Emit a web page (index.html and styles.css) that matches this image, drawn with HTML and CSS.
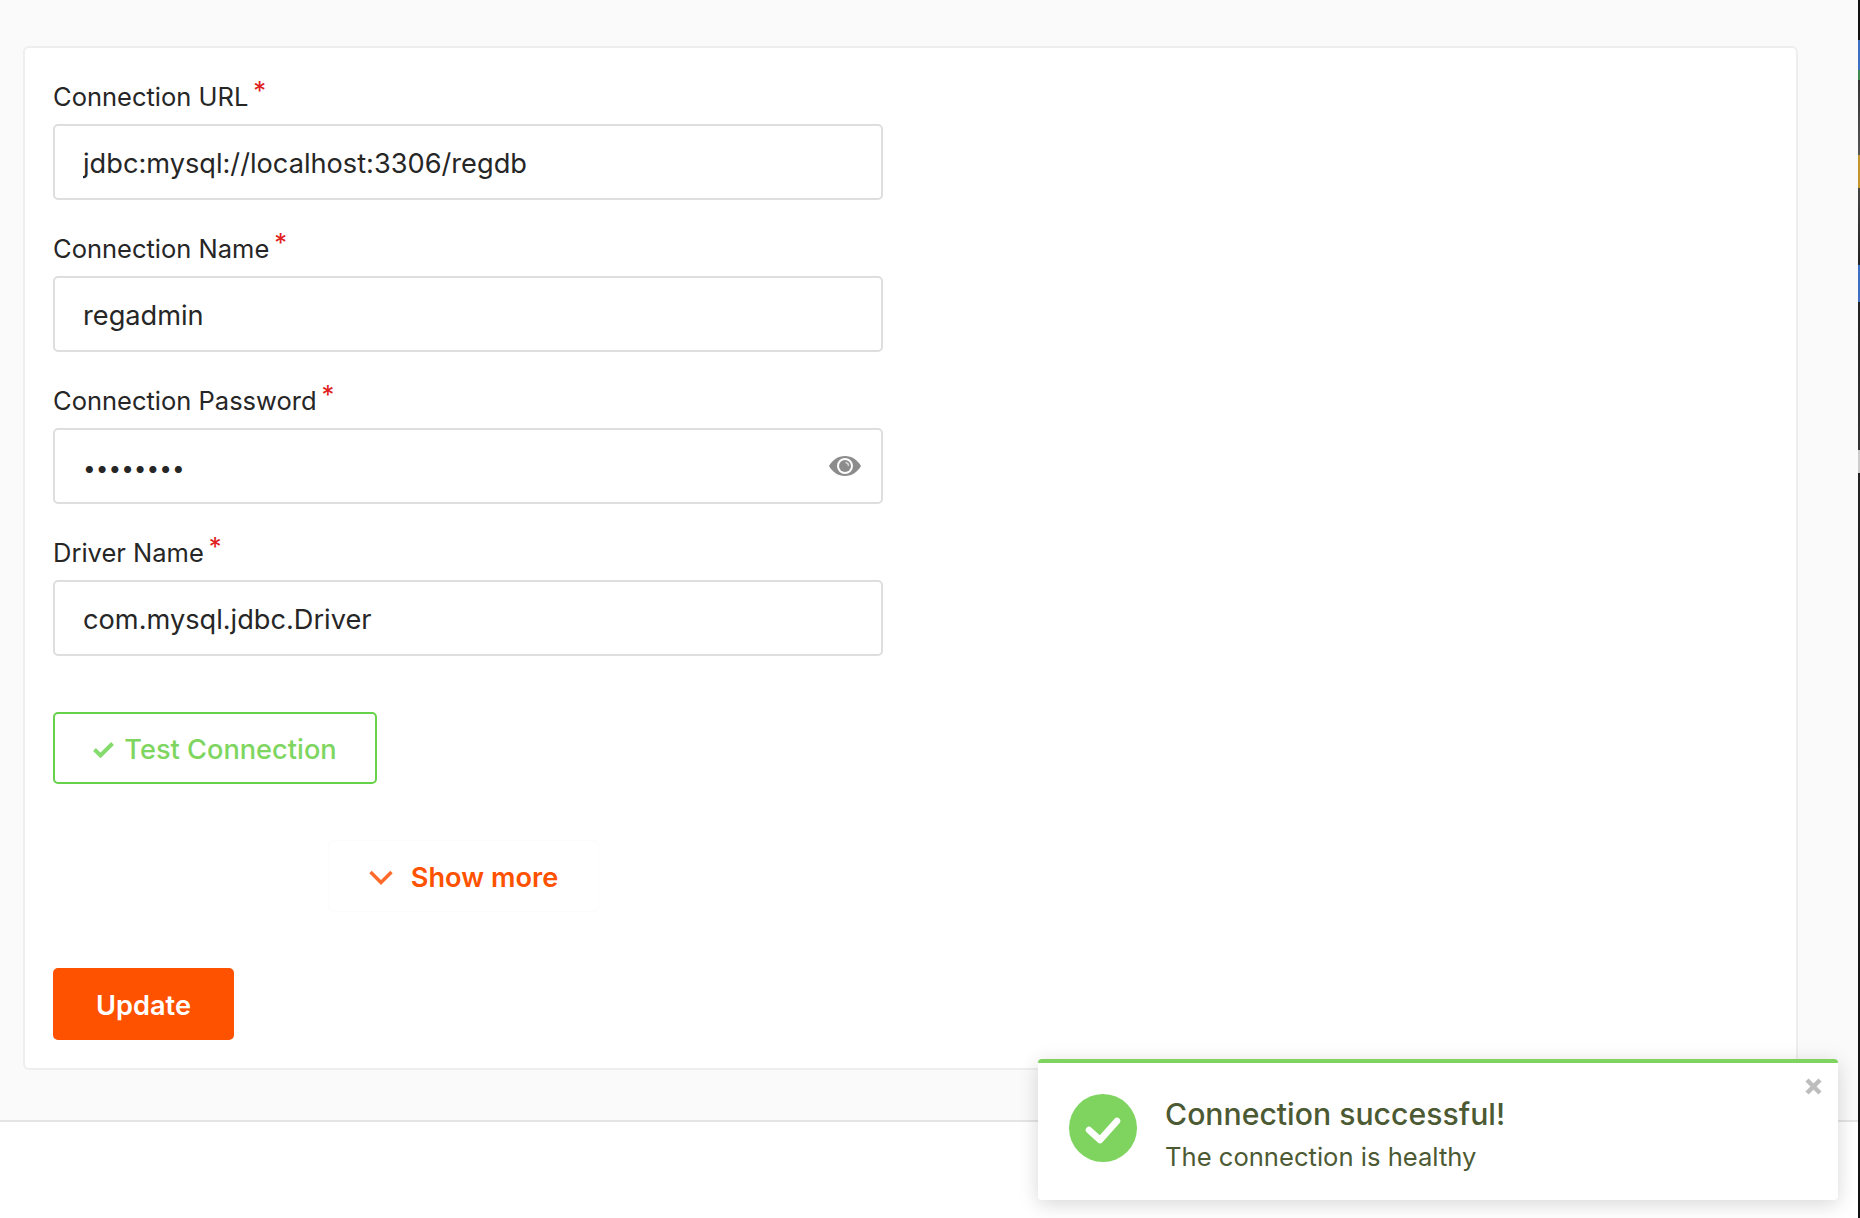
FILE: index.html
```html
<!DOCTYPE html>
<html lang="en">
<head>
    <meta charset="UTF-8">
    <meta name="viewport" content="width=device-width, initial-scale=1.0">
    <title>Edit Connection</title>
    <link rel="stylesheet" href="styles.css">
</head>
<body>
    <div class="page">
        <main class="content">
            <form class="card">
                <div class="field">
                    <label for="url">Connection URL<span class="req">*</span></label>
                    <input type="text" id="url" value="jdbc:mysql://localhost:3306/regdb">
                </div>
                <div class="field">
                    <label for="user">Connection Name<span class="req">*</span></label>
                    <input type="text" id="user" value="regadmin">
                </div>
                <div class="field">
                    <label for="password">Connection Password<span class="req">*</span></label>
                    <div class="password-box">
                        <input type="password" id="password" value="regadmin">
                        <svg class="eye" viewBox="0 0 32 20" width="32" height="20">
                            <path fill="#8c8c8c" fill-rule="evenodd" d="M16 0C9 0 3.500 4 0 10c3.500 6 9 10 16 10s12.500-4 16-10C28.500 4 23 0 16 0zm0 2a8 8 0 1 1 0 16 8 8 0 0 1 0-16z"/>
                            <circle cx="16" cy="10" r="6" fill="#8c8c8c"/>
                            <path fill="none" stroke="#d6d6d6" stroke-width="1.500" d="M16.500 6.500a3.500 3.500 0 0 1 3 3.500"/>
                        </svg>
                    </div>
                </div>
                <div class="field">
                    <label for="driver">Driver Name<span class="req">*</span></label>
                    <input type="text" id="driver" value="com.mysql.jdbc.Driver">
                </div>

                <button type="button" class="test-btn">
                    <svg viewBox="0 0 21 17" width="21" height="17">
                        <path fill="none" stroke="#85db6e" stroke-width="4" d="M1.500 8.500l6 6L19.500 2.500"/>
                    </svg>
                    Test Connection
                </button>

                <div class="more-row">
                    <button type="button" class="more-btn">
                        <svg viewBox="0 0 24 15" width="24" height="15">
                            <path fill="none" stroke="#ff6a2b" stroke-width="3.500" d="M1.500 2l10.500 10.500L22.500 2"/>
                        </svg>
                        Show more
                    </button>
                </div>

                <button type="submit" class="update-btn">Update</button>
            </form>
        </main>
        <footer class="footer"></footer>
    </div>
    <div class="window-edge"></div>

    <div class="toast">
        <svg class="toast-icon" viewBox="0 0 68 68" width="68" height="68">
            <circle cx="34" cy="34" r="34" fill="#7ed45f"/>
            <path fill="none" stroke="#fff" stroke-width="6.500" stroke-linecap="round" stroke-linejoin="round" d="M20 36l11 10 17-19"/>
        </svg>
        <div class="toast-body">
            <div class="toast-title">Connection successful!</div>
            <div class="toast-text">The connection is healthy</div>
        </div>
        <svg class="toast-close" viewBox="0 0 17 17" width="17" height="17">
            <path stroke="#bdbdbd" stroke-width="4.500" d="M2 2l13 13M15 2L2 15"/>
        </svg>
    </div>
</body>
</html>
```

FILE: styles.css
```css
* {
    box-sizing: border-box;
}

body {
    margin: 0;
    display: flex;
    height: 1218px;
    overflow: hidden;
    font-family: Inter, "Noto Sans", sans-serif;
    color: #262626;
    background: white;
}

.page {
    flex: 1;
}

.content {
    height: 1122px;
    padding: 46px 60px 0 23px;
    background: #fafafa;
    border-bottom: 2px solid #e4e4e4;
}

.window-edge {
    width: 2px;
    background: linear-gradient(#111 0, #111 40px, #3f6fc4 40px, #3f6fc4 70px, #3f8a4a 70px, #3f8a4a 80px, #333 80px, #555 155px, #c4952f 155px, #c4952f 188px, #444 188px, #222 265px, #3f6fc4 265px, #3f6fc4 302px, #222 302px, #333 450px, #ccc 450px, #ccc 473px, #222 473px, #111 100%);
}

.card {
    display: flex;
    flex-direction: column;
    align-items: flex-start;
    height: 1024px;
    padding: 29px 28px 0;
    background: white;
    border: 2px solid #eeeeee;
    border-radius: 6px;
}

.field {
    width: 830px;
    height: 152px;
}

label {
    display: block;
    height: 47px;
    font-size: 25.5px;
    line-height: 40px;
}

.req {
    position: relative;
    top: -6px;
    margin-left: 5px;
    color: #e02020;
}

input {
    display: block;
    width: 100%;
    height: 76px;
    padding: 3px 28px 0;
    background: white;
    border: 2px solid #dedede;
    border-radius: 5px;
    font-family: inherit;
    font-size: 27.2px;
    color: #262626;
}

input[type="password"] {
    font-size: 22.6px;
}

.password-box {
    position: relative;
}

.eye {
    position: absolute;
    top: 28px;
    right: 22px;
}

button {
    display: flex;
    align-items: center;
    justify-content: center;
    padding: 2px 0 0;
    border-radius: 5px;
    font-family: inherit;
    font-size: 27.2px;
    cursor: pointer;
}

.test-btn {
    gap: 10px;
    width: 324px;
    height: 72px;
    margin-top: 27px;
    background: white;
    border: 2px solid #66d24a;
    color: #7ed660;
    font-weight: 500;
}

.more-row {
    width: 830px;
    height: 184px;
    padding-right: 9px;
    display: flex;
    justify-content: center;
    align-items: center;
}

.more-btn {
    gap: 18px;
    width: 271px;
    height: 72px;
    background: none;
    border: 1px solid #fcfcfc;
    color: #ff5200;
    font-weight: 600;
}

.update-btn {
    width: 181px;
    height: 72px;
    background: #ff5200;
    border: none;
    color: white;
    font-weight: 600;
}

.toast {
    position: absolute;
    left: 1038px;
    top: 1059px;
    width: 800px;
    height: 141px;
    display: flex;
    align-items: flex-start;
    gap: 28px;
    padding: 31px 31px 0;
    background: white;
    border-top: 4px solid #7ed45f;
    border-radius: 4px;
    box-shadow: 0 4px 20px rgba(0, 0, 0, 0.16);
    color: #4c5a33;
}

.toast-title {
    font-size: 30.2px;
    font-weight: 500;
    line-height: 40px;
}

.toast-text {
    margin-top: 7px;
    font-size: 25.6px;
    line-height: 32px;
}

.toast-close {
    position: absolute;
    top: 15px;
    right: 16px;
}
```
